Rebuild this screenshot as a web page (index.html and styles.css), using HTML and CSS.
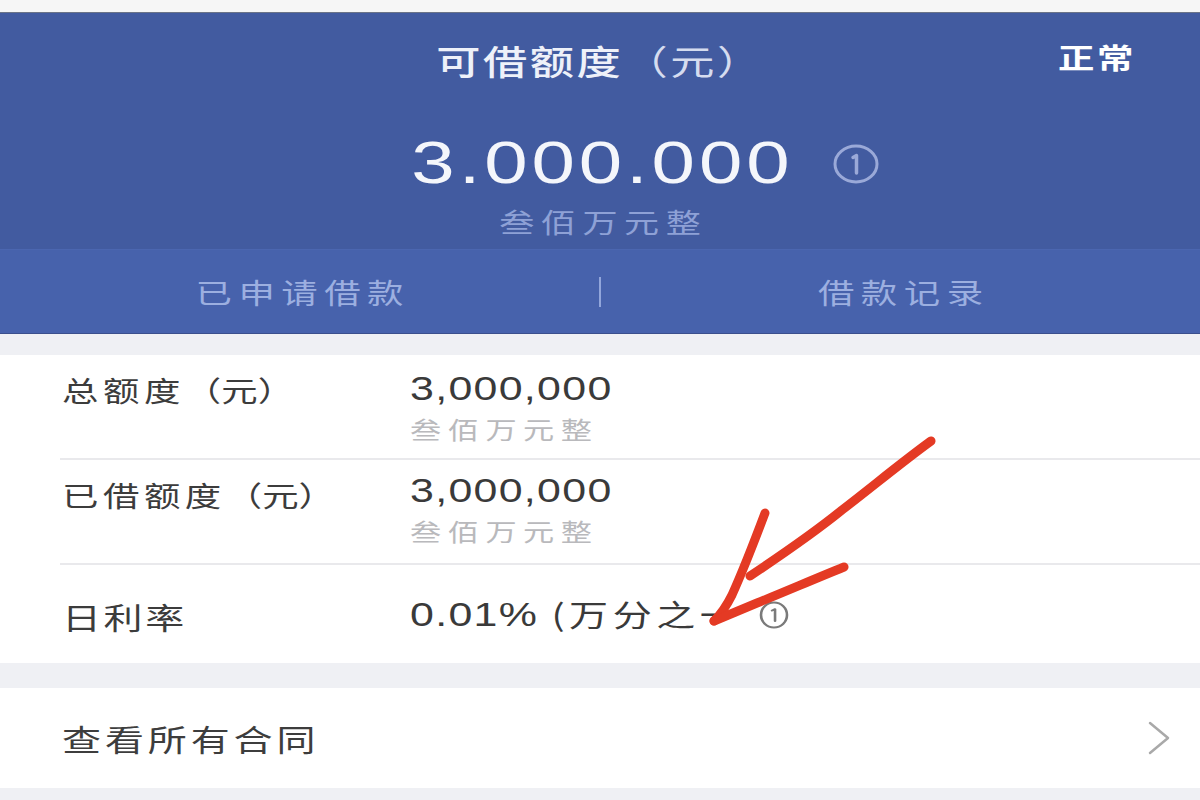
FILE: index.html
```html
<!DOCTYPE html>
<html lang="zh-CN">
<head>
<meta charset="utf-8">
<title>可借额度</title>
<link rel="stylesheet" href="styles.css">
</head>
<body>
<div class="page">
  <div class="topstrip"></div>
  <header class="hero">
    <div class="hero-main">
      <div class="title-row">
        <div class="title-spacer"></div>
        <h1 class="title wide-c">可借额度<span class="unit">（元）</span></h1>
        <div class="status-cell"><span class="status wide-r">正常</span></div>
      </div>
      <div class="amount-row">
        <div class="amount-spacer"></div>
        <div class="amount wide-c">3.000.000</div>
        <div class="amount-info">
          <svg class="info-big" viewBox="0 0 48 44" width="48" height="44">
            <ellipse cx="24" cy="22" rx="21" ry="18" fill="none" stroke="#9aa9d8" stroke-width="3"/>
            <path d="M21 15.5 L24.5 13.5 L24.5 31" fill="none" stroke="#9aa9d8" stroke-width="3.5" stroke-linecap="round" stroke-linejoin="round"/>
          </svg>
        </div>
      </div>
      <div class="amount-cn wide-c">叁佰万元整</div>
    </div>
    <nav class="tabs">
      <div class="tab wide-c">已申请借款</div>
      <div class="tab-sep"></div>
      <div class="tab wide-c">借款记录</div>
    </nav>
  </header>

  <div class="gap gap-top"></div>

  <section class="card">
    <div class="row row-multi">
      <div class="label wide-l">总额度<span class="paren">（元）</span></div>
      <div class="value-col">
        <div class="value wide-l">3,000,000</div>
        <div class="value-sub wide-l">叁佰万元整</div>
      </div>
    </div>
    <div class="row row-multi row-second">
      <div class="label wide-l">已借额度<span class="paren">（元）</span></div>
      <div class="value-col">
        <div class="value wide-l">3,000,000</div>
        <div class="value-sub wide-l">叁佰万元整</div>
      </div>
    </div>
    <div class="row row-single">
      <div class="label label-rate wide-l">日利率</div>
      <div class="value-inline wide-l">
        <span class="rate">0.01% <span class="rate-cn">(万分之一</span></span>
        <svg class="info-small" viewBox="0 0 24 30" width="24" height="30">
          <ellipse cx="12" cy="15" rx="10" ry="12.5" fill="none" stroke="#7a7a7a" stroke-width="2"/>
          <path d="M10.5 10.5 L12.8 9.2 L12.8 21" fill="none" stroke="#7a7a7a" stroke-width="2" stroke-linecap="round" stroke-linejoin="round"/>
        </svg>
      </div>
    </div>
  </section>

  <div class="gap gap-mid"></div>

  <section class="card">
    <div class="link-row">
      <div class="link-text wide-l">查看所有合同</div>
      <svg class="chevron" viewBox="0 0 26 36" width="26" height="36">
        <path d="M4 3 L22 18 L4 33" fill="none" stroke="#a9a9a9" stroke-width="2.5" stroke-linecap="round" stroke-linejoin="round"/>
      </svg>
    </div>
  </section>

  <div class="gap gap-bottom"></div>

  <svg class="annotation" viewBox="0 0 1200 800" width="1200" height="800">
    <g fill="none" stroke="#e43a24" stroke-width="9" stroke-linecap="round" stroke-linejoin="round">
      <path d="M931 441 C 902 462, 872 487, 842 510 C 810 536, 780 556, 750 576"/>
      <path d="M765 513 C 753 545, 741 575, 732 595 C 726 607, 720 615, 714 621"/>
      <path d="M844 567 C 812 580, 782 593, 757 603 C 740 610, 726 616, 714 621"/>
    </g>
  </svg>
</div>
</body>
</html>
```

FILE: styles.css
```css
* {
  box-sizing: border-box;
}

html, body {
  margin: 0;
  padding: 0;
  background: #ffffff;
}

body {
  font-family: "Noto Sans CJK SC", "Liberation Sans", sans-serif;
  width: 1200px;
  height: 800px;
  overflow: hidden;
}

/* the source screenshot is stretched horizontally; reproduce that width */
.wide-l,
.wide-c,
.wide-r {
  transform: scaleX(1.3);
}

.wide-l {
  transform-origin: left center;
}

.wide-c {
  transform-origin: center center;
}

.wide-r {
  transform-origin: right center;
}

.page {
  position: relative;
  width: 1200px;
  height: 800px;
  display: flex;
  flex-direction: column;
  background: #ffffff;
  overflow: hidden;
}

.topstrip {
  height: 13px;
  background: #f6f6f6;
  border-bottom: 1px solid #6b7488;
}

.hero {
  background: #425ba0;
  display: flex;
  flex-direction: column;
  height: 320px;
}

.hero-main {
  display: flex;
  flex-direction: column;
  padding-top: 26px;
  height: 236px;
}

.title-row {
  display: grid;
  grid-template-columns: 1fr auto 1fr;
  align-items: start;
}

.title {
  margin: 0;
  font-size: 34px;
  line-height: 44px;
  font-weight: 500;
  color: #eef1f9;
  letter-spacing: 2px;
}

.unit {
  font-weight: 400;
  color: #d5dcef;
}

.status-cell {
  justify-self: end;
  margin-right: 64px;
}

.status {
  display: inline-block;
  font-size: 28px;
  line-height: 36px;
  font-weight: 700;
  color: #ffffff;
  letter-spacing: 2px;
}

.amount-row {
  display: grid;
  grid-template-columns: 1fr auto 1fr;
  align-items: center;
  margin-top: 45px;
}

.amount {
  font-family: "Liberation Sans", "Noto Sans", sans-serif;
  font-size: 60px;
  line-height: 70px;
  color: #f4f6fb;
  letter-spacing: 3px;
  padding-left: 3px;
}

.amount-info {
  display: flex;
  align-items: center;
  padding-left: 84px;
  padding-top: 2px;
}

.info-big {
  display: block;
}

.amount-cn {
  text-align: center;
  font-size: 27px;
  line-height: 36px;
  color: #8ea1d6;
  letter-spacing: 5px;
  padding-left: 5px;
  margin-top: 6px;
}

.tabs {
  flex: 1;
  display: grid;
  grid-template-columns: 1fr 2px 1fr;
  align-items: center;
  background: #4762ac;
  border-top: 1px solid #4b66b0;
}

.tab {
  text-align: center;
  font-size: 28px;
  line-height: 40px;
  color: #9cafe0;
  letter-spacing: 5px;
  padding-left: 5px;
}

.tab-sep {
  width: 2px;
  height: 30px;
  background: #92a6db;
}

.gap {
  background: #eff0f4;
}

.gap-top {
  height: 22px;
  border-top: 1px solid #3b4f8c;
}

.gap-mid {
  height: 25px;
}

.gap-bottom {
  flex: 1;
}

.card {
  background: #ffffff;
  display: flex;
  flex-direction: column;
}

.row {
  display: flex;
  margin-left: 60px;
  padding-left: 2px;
}

.row-multi {
  height: 105px;
  padding-top: 14px;
  border-bottom: 2px solid #e9e9ec;
}

.row-second {
  padding-top: 11px;
}

.row-single {
  height: 98px;
  align-items: center;
}

.label {
  width: 348px;
  flex: none;
  font-size: 28px;
  line-height: 40px;
  color: #3c3c3c;
  letter-spacing: 3.5px;
  padding-top: 1px;
}

.row-second .label {
  padding-top: 4px;
}

.paren {
  letter-spacing: 0;
}

.label-rate {
  font-size: 30px;
  letter-spacing: 2px;
  padding-top: 4px;
}

.value-col {
  display: flex;
  flex-direction: column;
}

.value {
  font-family: "Liberation Sans", "Noto Sans CJK SC", sans-serif;
  font-size: 33px;
  line-height: 40px;
  color: #3a3a3a;
  letter-spacing: 1px;
}

.value-sub {
  font-size: 24px;
  line-height: 40px;
  color: #b9b9bc;
  letter-spacing: 5px;
}

.value-inline {
  display: flex;
  align-items: center;
}

.rate {
  font-family: "Liberation Sans", "Noto Sans CJK SC", sans-serif;
  font-size: 33px;
  line-height: 40px;
  color: #3a3a3a;
  letter-spacing: 1px;
}

.rate-cn {
  font-family: "Noto Sans CJK SC", sans-serif;
  font-size: 30px;
  letter-spacing: 3.5px;
}

.info-small {
  display: block;
  margin-left: 12px;
  margin-top: 2px;
}

.link-row {
  height: 100px;
  display: flex;
  align-items: center;
  justify-content: space-between;
  padding-left: 62px;
  padding-right: 28px;
}

.link-text {
  font-size: 30px;
  line-height: 40px;
  color: #3d3d3d;
  letter-spacing: 3px;
}

.chevron {
  display: block;
}

.annotation {
  position: absolute;
  left: 0;
  top: 0;
  pointer-events: none;
}
```
